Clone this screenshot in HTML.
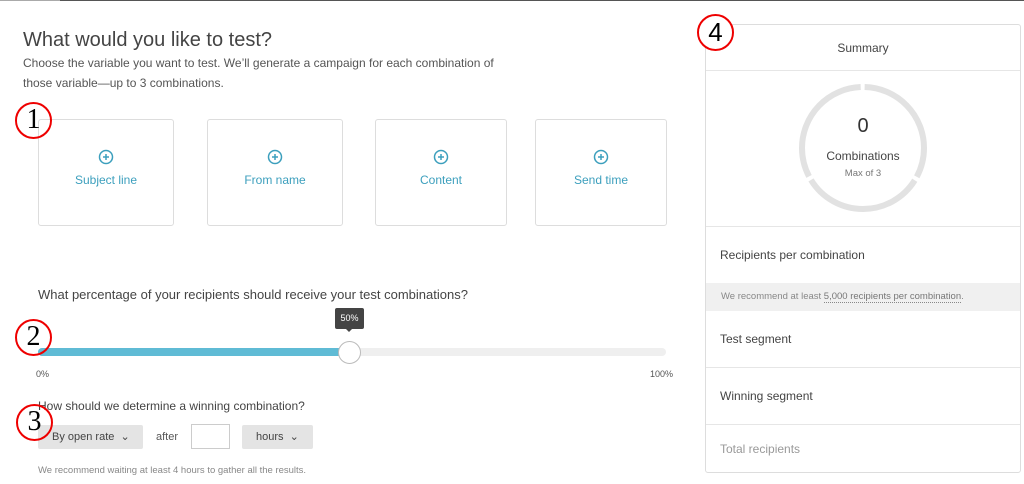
<!DOCTYPE html>
<html><head><meta charset="utf-8"><style>
*{margin:0;padding:0;box-sizing:border-box}
body{width:1024px;height:484px;background:#fff;position:relative;overflow:hidden;font-family:"Liberation Sans",sans-serif;color:#444}
.a{position:absolute;white-space:nowrap}
.card{position:absolute;top:119px;height:107px;border:1px solid #ddd;border-radius:3px}
.card svg{position:absolute;left:50%;top:29px;margin-left:-8px}
.card span{position:absolute;left:0;right:0;top:53px;text-align:center;font-size:12px;color:#3c9fbd}
.num{position:absolute;width:37px;height:37px;border:2.5px solid #e00;border-radius:50%;font-family:"Liberation Serif",serif;font-size:28px;color:#000;text-align:center;line-height:32px}
.dd{position:absolute;top:425px;height:24px;background:#e4e4e4;border-radius:2px;font-size:11px;color:#444;line-height:24px;padding-left:14px}
.row{position:absolute;left:706px;width:314px;border-top:1px solid #e6e6e6;font-size:12px;color:#444;padding-left:14px}
</style></head><body>
<div class="a" style="left:0;top:0;width:60px;height:1px;background:#aaa"></div>
<div class="a" style="left:60px;top:0;width:964px;height:1px;background:#555"></div>
<div class="a" style="left:23px;top:29px;font-size:20px;color:#444">What would you like to test?</div>
<div class="a" style="left:23px;top:53px;font-size:12px;color:#555;line-height:20px;white-space:normal;width:500px">Choose the variable you want to test. We’ll generate a campaign for each combination of<br>those variable—up to 3 combinations.</div>

<div class="card" style="left:38px;width:136px"><svg width="16" height="16"><circle cx="8" cy="8" r="6.5" fill="none" stroke="#3c9fbd" stroke-width="1.5"/><path d="M8 5v6M5 8h6" stroke="#3c9fbd" stroke-width="1.5"/></svg><span>Subject line</span></div>
<div class="card" style="left:207px;width:136px"><svg width="16" height="16"><circle cx="8" cy="8" r="6.5" fill="none" stroke="#3c9fbd" stroke-width="1.5"/><path d="M8 5v6M5 8h6" stroke="#3c9fbd" stroke-width="1.5"/></svg><span>From name</span></div>
<div class="card" style="left:375px;width:132px"><svg width="16" height="16"><circle cx="8" cy="8" r="6.5" fill="none" stroke="#3c9fbd" stroke-width="1.5"/><path d="M8 5v6M5 8h6" stroke="#3c9fbd" stroke-width="1.5"/></svg><span>Content</span></div>
<div class="card" style="left:535px;width:132px"><svg width="16" height="16"><circle cx="8" cy="8" r="6.5" fill="none" stroke="#3c9fbd" stroke-width="1.5"/><path d="M8 5v6M5 8h6" stroke="#3c9fbd" stroke-width="1.5"/></svg><span>Send time</span></div>
<div class="num" style="left:15px;top:102px;background:transparent">1</div>

<div class="a" style="left:38px;top:287px;font-size:13px;color:#444">What percentage of your recipients should receive your test combinations?</div>
<div class="a" style="left:335px;top:308px;width:29px;height:21px;background:#444;border-radius:2px;color:#fff;font-size:9px;text-align:center;line-height:21px">50%</div>
<div class="a" style="left:345px;top:328px;width:0;height:0;border:4px solid transparent;border-top-color:#444"></div>
<div class="a" style="left:38px;top:348px;width:628px;height:8px;background:#efefef;border-radius:4px"></div>
<div class="a" style="left:38px;top:348px;width:312px;height:8px;background:#5fbbd5;border-radius:4px 0 0 4px"></div>
<div class="a" style="left:338px;top:341px;width:23px;height:23px;background:#fff;border:1.5px solid #bbb;border-radius:50%"></div>
<div class="num" style="left:15px;top:319px">2</div>
<div class="a" style="left:36px;top:369px;font-size:9px;color:#555">0%</div>
<div class="a" style="left:650px;top:369px;font-size:9px;color:#555">100%</div>

<div class="a" style="left:38px;top:399px;font-size:12px;color:#444">How should we determine a winning combination?</div>
<div class="dd" style="left:38px;width:105px">By open rate &nbsp;⌄</div>
<div class="a" style="left:156px;top:431px;font-size:11px;color:#555">after</div>
<div class="a" style="left:191px;top:424px;width:39px;height:25px;border:1px solid #ccc;background:#fff"></div>
<div class="dd" style="left:242px;width:71px">hours &nbsp;⌄</div>
<div class="num" style="left:16px;top:404px">3</div>
<div class="a" style="left:38px;top:465px;font-size:9.5px;color:#888">We recommend waiting at least 4 hours to gather all the results.</div>

<div class="a" style="left:705px;top:24px;width:316px;height:449px;border:1px solid #ddd;border-radius:3px"></div>
<div class="a" style="left:706px;top:41px;width:314px;text-align:center;font-size:12px;color:#444">Summary</div>
<div class="a" style="left:706px;top:70px;width:314px;height:1px;background:#e6e6e6"></div>
<svg class="a" style="left:797px;top:82px" width="132" height="132"><circle cx="66" cy="66" r="61" fill="none" stroke="#e2e2e2" stroke-width="6" stroke-dasharray="30 4 124 4 123 4 94 0"/></svg>
<div class="a" style="left:706px;top:115px;width:314px;text-align:center;font-size:20px;color:#333">0</div>
<div class="a" style="left:706px;top:149px;width:314px;text-align:center;font-size:12px;color:#444">Combinations</div>
<div class="a" style="left:706px;top:168px;width:314px;text-align:center;font-size:9.5px;color:#777">Max of 3</div>
<div class="row" style="top:226px;height:57px;line-height:56px">Recipients per combination</div>
<div class="a" style="left:706px;top:283px;width:314px;height:28px;background:#f0f0f0;font-size:9.5px;color:#888;line-height:28px;padding-left:15px">We recommend at least <span style="border-bottom:1px dotted #888;color:#777">5,000 recipients per combination</span>.</div>
<div class="row" style="top:311px;height:57px;line-height:56px;border-top:none">Test segment</div>
<div class="row" style="top:367px;height:57px;line-height:56px">Winning segment</div>
<div class="row" style="top:424px;height:48px;line-height:48px;color:#999">Total recipients</div>
<div class="num" style="left:697px;top:14px;background:#fff;font-family:'Liberation Sans',sans-serif;font-size:26px">4</div>
</body></html>
